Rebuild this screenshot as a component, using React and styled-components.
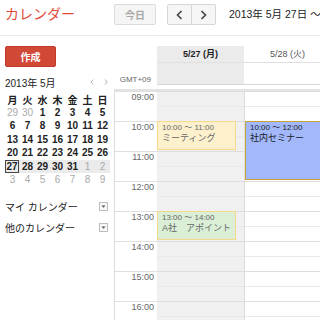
import React from "react";
import styled, { createGlobalStyle } from "styled-components";

const GlobalStyle = createGlobalStyle`
  *, *::before, *::after { box-sizing: border-box; }
  html, body { margin: 0; padding: 0; background: #fff; }
  body {
    font-family: "Liberation Sans", "Noto Sans CJK JP", sans-serif;
    color: #222;
  }
`;

const Page = styled.div`
  width: 320px;
  height: 320px;
  overflow: hidden;
  display: flex;
  flex-direction: column;
`;

const TopBar = styled.header`
  flex: none;
  height: 36px;
  display: flex;
  align-items: flex-start;
  padding-top: 4px;
  border-bottom: 1px solid #ebebeb;
`;

const Logo = styled.div`
  flex: none;
  width: 114px;
  padding-left: 5px;
  font-size: 14px;
  line-height: 21px;
  color: #dd4b39;
`;

const TodayButton = styled.button`
  flex: none;
  width: 42px;
  height: 21px;
  padding: 0;
  border: 1px solid #dcdcdc;
  border-radius: 2px;
  background: #f5f5f5;
  color: #a8a8a8;
  font: bold 10px "Liberation Sans", "Noto Sans CJK JP", sans-serif;
`;

const NavGroup = styled.div`
  flex: none;
  display: flex;
  margin-left: 11px;
`;

const NavButton = styled.button`
  width: 25px;
  height: 21px;
  padding: 0;
  display: flex;
  align-items: center;
  justify-content: center;
  border: 1px solid #d6d6d6;
  background: #f5f5f5;
  border-radius: ${({ $side }) => ($side === "left" ? "2px 0 0 2px" : "0 2px 2px 0")};
  margin-left: ${({ $side }) => ($side === "left" ? "0" : "-1px")};
`;

const RangeText = styled.div`
  flex: none;
  margin-left: 13px;
  font-size: 10.5px;
  line-height: 21px;
  white-space: nowrap;
  color: #222;
`;

const Main = styled.div`
  flex: 1;
  min-height: 0;
  display: flex;
`;

const Sidebar = styled.aside`
  flex: none;
  width: 114px;
  padding: 10px 6px 0 5px;
`;

const CreateButton = styled.button`
  width: 51px;
  height: 21px;
  padding: 0;
  border: 1px solid #c0392b;
  border-radius: 2px;
  background: #d14836;
  color: #fff;
  font: bold 10px "Liberation Sans", "Noto Sans CJK JP", sans-serif;
`;

const MiniHead = styled.div`
  margin-top: 9px;
  width: 105px;
  display: flex;
  align-items: center;
  justify-content: space-between;
  height: 12px;
  font-size: 10px;
  color: #222;
`;

const MiniArrows = styled.div`
  display: flex;
  gap: 10px;
  padding-right: 2px;
`;

const MiniGrid = styled.div`
  margin-top: 4px;
  width: 105px;
  display: grid;
  grid-template-columns: repeat(7, 15px);
`;

const WeekRow = styled.div`
  grid-column: 1 / -1;
  display: grid;
  grid-template-columns: repeat(7, 15px);
  height: 13.5px;
  background: ${({ $selected }) => ($selected ? "#ebebeb" : "transparent")};
`;

const MiniCell = styled.div`
  display: flex;
  align-items: center;
  justify-content: center;
  font-size: 10px;
  font-weight: ${({ $muted }) => ($muted ? "normal" : "bold")};
  color: ${({ $muted }) => ($muted ? "#aaa" : "#222")};
`;

const TodayMark = styled.span`
  display: flex;
  align-items: center;
  justify-content: center;
  width: 14px;
  height: 13px;
  margin-left: -1px;
  border: 1px solid #444;
`;

const CalSection = styled.div`
  margin-top: ${({ $first }) => ($first ? "9px" : "0")};
  height: 21px;
  display: flex;
  align-items: center;
  justify-content: space-between;
  font-size: 10px;
  color: #222;
`;

const Pane = styled.div`
  flex: 1;
  min-width: 0;
  padding-top: 10px;
  display: flex;
  flex-direction: column;
`;

const Columns = styled.div`
  display: grid;
  grid-template-columns: 43px 87px 87px;
`;

const DayHead = styled.div`
  height: 17px;
  line-height: 16px;
  text-align: center;
  font-size: 9px;
  font-weight: ${({ $today }) => ($today ? "bold" : "normal")};
  color: ${({ $today }) => ($today ? "#222" : "#555")};
  background: ${({ $today }) => ($today ? "#ebebeb" : "#fff")};
  border-bottom: 1px solid #e0e0e0;
`;

const AllDay = styled.div`
  height: 22px;
  background: ${({ $today }) => ($today ? "#ebebeb" : "#fff")};
  border-bottom: 1px solid #d8d8d8;
`;

const Zone = styled.div`
  height: 22px;
  display: flex;
  align-items: flex-end;
  justify-content: flex-end;
  padding: 0 6px 1px 0;
  font-size: 8px;
  color: #666;
`;

const Body = styled(Columns)`
  margin-top: 4px;
  border-top: 2px solid #e3e3e3;
`;

const Gutter = styled.div`
  border-left: 1px solid #dcdcdc;
`;

const TimeSlot = styled.div`
  height: 30px;
  border-top: 1px solid #e0e0e0;
  padding: 1px 3px 0 0;
  text-align: right;
  font-size: 9px;
  line-height: 9px;
  color: #666;
`;

const DayColumn = styled.div`
  position: relative;
  background: ${({ $today }) => ($today ? "#f0f0f0" : "#fff")};
  border-left: ${({ $today }) => ($today ? "none" : "1px solid #dcdcdc")};
`;

const Slot = styled.div`
  height: 30px;
  border-top: 1px solid #dddddd;
  background-image: linear-gradient(
    to bottom,
    transparent 14px,
    #e9e9e9 14px,
    #e9e9e9 15px,
    transparent 15px
  );
`;

const Event = styled.div`
  position: absolute;
  left: 0;
  padding: 1px 0 0 4px;
  overflow: hidden;
  background: ${({ $bg }) => $bg};
  border: 1px solid ${({ $line }) => $line};
  color: ${({ $ink }) => $ink};
`;

const EventTime = styled.div`
  font-size: 8px;
  line-height: 10px;
  white-space: nowrap;
`;

const EventTitle = styled.div`
  font-size: 9px;
  line-height: 11px;
  white-space: nowrap;
`;

const Chevron = ({ dir, size = 10, color = "#444", width = 1.6 }) => (
  <svg width={size * 0.7} height={size} viewBox="0 0 7 10">
    <polyline
      points={dir === "left" ? "5.5,1 1.5,5 5.5,9" : "1.5,1 5.5,5 1.5,9"}
      fill="none"
      stroke={color}
      strokeWidth={width}
    />
  </svg>
);

const MenuBox = () => (
  <svg width="9" height="9" viewBox="0 0 9 9">
    <rect x="0.5" y="0.5" width="8" height="8" fill="#f7f7f7" stroke="#bdbdbd" />
    <path d="M2.5 3.5 H6.5 L4.5 5.7 Z" fill="#555" />
  </svg>
);

const weekdays = ["月", "火", "水", "木", "金", "土", "日"];

const weeks = [
  [29, 30, 1, 2, 3, 4, 5],
  [6, 7, 8, 9, 10, 11, 12],
  [13, 14, 15, 16, 17, 18, 19],
  [20, 21, 22, 23, 24, 25, 26],
  [27, 28, 29, 30, 31, 1, 2],
  [3, 4, 5, 6, 7, 8, 9],
];

const isMuted = (w, i) =>
  (w === 0 && i < 2) || (w === 4 && i > 4) || w === 5;

const hours = [9, 10, 11, 12, 13, 14, 15, 16];
const pad = (h) => String(h).padStart(2, "0") + ":00";

const events = [
  {
    day: 0,
    start: 10,
    end: 11,
    title: "ミーティング",
    bg: "#fdf1cd",
    line: "#f7d98c",
    ink: "#666",
  },
  {
    day: 1,
    start: 10,
    end: 12,
    title: "社内セミナー",
    bg: "#a2b8fb",
    line: "#c6a43c",
    ink: "#1a1a1a",
  },
  {
    day: 0,
    start: 13,
    end: 14,
    title: "A社　アポイント",
    bg: "#dbeed6",
    line: "#f5d98a",
    ink: "#666",
  },
];

const days = [
  { label: "5/27 (月)", today: true },
  { label: "5/28 (火)", today: false },
];

const App = () => {
  return (
    <Page>
      <GlobalStyle />
      <TopBar>
        <Logo>カレンダー</Logo>
        <TodayButton>今日</TodayButton>
        <NavGroup>
          <NavButton $side="left">
            <Chevron dir="left" />
          </NavButton>
          <NavButton $side="right">
            <Chevron dir="right" />
          </NavButton>
        </NavGroup>
        <RangeText>2013年 5月 27日 ～</RangeText>
      </TopBar>

      <Main>
        <Sidebar>
          <CreateButton>作成</CreateButton>
          <MiniHead>
            <span>2013年 5月</span>
            <MiniArrows>
              <Chevron dir="left" size={6} color="#888" width={1.2} />
              <Chevron dir="right" size={6} color="#888" width={1.2} />
            </MiniArrows>
          </MiniHead>
          <MiniGrid>
            <WeekRow>
              {weekdays.map((d) => (
                <MiniCell key={d}>{d}</MiniCell>
              ))}
            </WeekRow>
            {weeks.map((week, w) => (
              <WeekRow key={w} $selected={w === 4}>
                {week.map((n, i) => (
                  <MiniCell key={i} $muted={isMuted(w, i)}>
                    {w === 4 && i === 0 ? <TodayMark>{n}</TodayMark> : n}
                  </MiniCell>
                ))}
              </WeekRow>
            ))}
          </MiniGrid>
          <CalSection $first>
            <span>マイ カレンダー</span>
            <MenuBox />
          </CalSection>
          <CalSection>
            <span>他のカレンダー</span>
            <MenuBox />
          </CalSection>
        </Sidebar>

        <Pane>
          <Columns>
            <div />
            {days.map((d) => (
              <DayHead key={d.label} $today={d.today}>
                {d.label}
              </DayHead>
            ))}
          </Columns>
          <Columns>
            <Zone>GMT+09</Zone>
            {days.map((d) => (
              <AllDay key={d.label} $today={d.today} />
            ))}
          </Columns>
          <Body>
            <Gutter>
              {hours.map((h) => (
                <TimeSlot key={h}>{pad(h)}</TimeSlot>
              ))}
            </Gutter>
            {days.map((d, di) => (
              <DayColumn key={d.label} $today={d.today}>
                {hours.map((h) => (
                  <Slot key={h} />
                ))}
                {events
                  .filter((e) => e.day === di)
                  .map((e) => (
                    <Event
                      key={e.title}
                      $bg={e.bg}
                      $line={e.line}
                      $ink={e.ink}
                      style={{
                        top: (e.start - 9) * 30,
                        height: (e.end - e.start) * 30 - 1,
                        width: d.today ? 79 : 87,
                      }}
                    >
                      <EventTime>
                        {pad(e.start)} ～ {pad(e.end)}
                      </EventTime>
                      <EventTitle>{e.title}</EventTitle>
                    </Event>
                  ))}
              </DayColumn>
            ))}
          </Body>
        </Pane>
      </Main>
    </Page>
  );
};

export default App;
